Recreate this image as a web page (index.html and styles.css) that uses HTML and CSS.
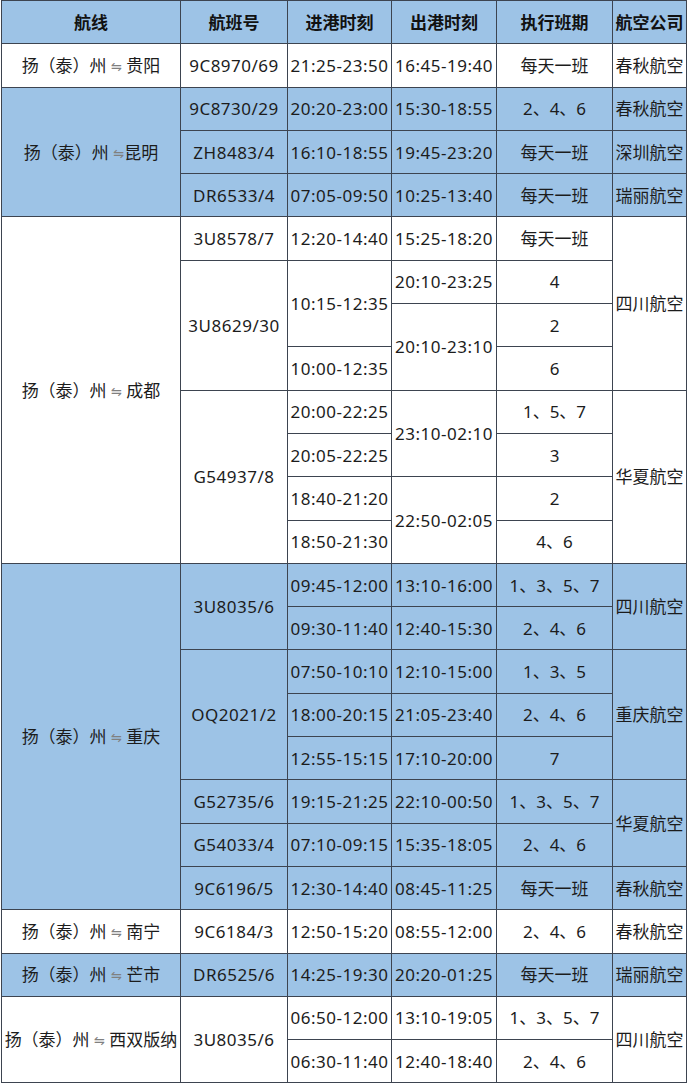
FILE: index.html
```html
<!DOCTYPE html>
<html lang="zh-CN">
<head>
<meta charset="utf-8">
<title>航线</title>
<link rel="stylesheet" href="styles.css">
</head>
<body>
<div class="grid">
  <div class="c h">航线</div>
  <div class="c h">航班号</div>
  <div class="c h">进港时刻</div>
  <div class="c h">出港时刻</div>
  <div class="c h">执行班期</div>
  <div class="c h">航空公司</div>

  <div class="c"><span class="rt">扬（泰）州 <span class="arr">⇋</span> 贵阳</span></div>
  <div class="c n">9C8970/69</div>
  <div class="c n">21:25-23:50</div>
  <div class="c n">16:45-19:40</div>
  <div class="c">每天一班</div>
  <div class="c">春秋航空</div>

  <div class="c b r3"><span class="rt">扬（泰）州 <span class="arr">⇋</span>昆明</span></div>
  <div class="c b n">9C8730/29</div>
  <div class="c b n">20:20-23:00</div>
  <div class="c b n">15:30-18:55</div>
  <div class="c b">2、4、6</div>
  <div class="c b">春秋航空</div>
  <div class="c b n">ZH8483/4</div>
  <div class="c b n">16:10-18:55</div>
  <div class="c b n">19:45-23:20</div>
  <div class="c b">每天一班</div>
  <div class="c b">深圳航空</div>
  <div class="c b n">DR6533/4</div>
  <div class="c b n">07:05-09:50</div>
  <div class="c b n">10:25-13:40</div>
  <div class="c b">每天一班</div>
  <div class="c b">瑞丽航空</div>

  <div class="c r8"><span class="rt">扬（泰）州 <span class="arr">⇋</span> 成都</span></div>
  <div class="c n">3U8578/7</div>
  <div class="c n">12:20-14:40</div>
  <div class="c n">15:25-18:20</div>
  <div class="c">每天一班</div>
  <div class="c r4">四川航空</div>
  <div class="c n r3">3U8629/30</div>
  <div class="c n r2">10:15-12:35</div>
  <div class="c n">20:10-23:25</div>
  <div class="c">4</div>
  <div class="c n r2">20:10-23:10</div>
  <div class="c">2</div>
  <div class="c n">10:00-12:35</div>
  <div class="c">6</div>
  <div class="c n r4">G54937/8</div>
  <div class="c n">20:00-22:25</div>
  <div class="c n r2">23:10-02:10</div>
  <div class="c">1、5、7</div>
  <div class="c r4">华夏航空</div>
  <div class="c n">20:05-22:25</div>
  <div class="c">3</div>
  <div class="c n">18:40-21:20</div>
  <div class="c n r2">22:50-02:05</div>
  <div class="c">2</div>
  <div class="c n">18:50-21:30</div>
  <div class="c">4、6</div>

  <div class="c b r8"><span class="rt">扬（泰）州 <span class="arr">⇋</span> 重庆</span></div>
  <div class="c b n r2">3U8035/6</div>
  <div class="c b n">09:45-12:00</div>
  <div class="c b n">13:10-16:00</div>
  <div class="c b">1、3、5、7</div>
  <div class="c b r2">四川航空</div>
  <div class="c b n">09:30-11:40</div>
  <div class="c b n">12:40-15:30</div>
  <div class="c b">2、4、6</div>
  <div class="c b n r3">OQ2021/2</div>
  <div class="c b n">07:50-10:10</div>
  <div class="c b n">12:10-15:00</div>
  <div class="c b">1、3、5</div>
  <div class="c b r3">重庆航空</div>
  <div class="c b n">18:00-20:15</div>
  <div class="c b n">21:05-23:40</div>
  <div class="c b">2、4、6</div>
  <div class="c b n">12:55-15:15</div>
  <div class="c b n">17:10-20:00</div>
  <div class="c b">7</div>
  <div class="c b n">G52735/6</div>
  <div class="c b n">19:15-21:25</div>
  <div class="c b n">22:10-00:50</div>
  <div class="c b">1、3、5、7</div>
  <div class="c b r2">华夏航空</div>
  <div class="c b n">G54033/4</div>
  <div class="c b n">07:10-09:15</div>
  <div class="c b n">15:35-18:05</div>
  <div class="c b">2、4、6</div>
  <div class="c b n">9C6196/5</div>
  <div class="c b n">12:30-14:40</div>
  <div class="c b n">08:45-11:25</div>
  <div class="c b">每天一班</div>
  <div class="c b">春秋航空</div>

  <div class="c"><span class="rt">扬（泰）州 <span class="arr">⇋</span> 南宁</span></div>
  <div class="c n">9C6184/3</div>
  <div class="c n">12:50-15:20</div>
  <div class="c n">08:55-12:00</div>
  <div class="c">2、4、6</div>
  <div class="c">春秋航空</div>

  <div class="c b"><span class="rt">扬（泰）州 <span class="arr">⇋</span> 芒市</span></div>
  <div class="c b n">DR6525/6</div>
  <div class="c b n">14:25-19:30</div>
  <div class="c b n">20:20-01:25</div>
  <div class="c b">每天一班</div>
  <div class="c b">瑞丽航空</div>

  <div class="c r2"><span class="rt">扬（泰）州 <span class="arr">⇋</span> 西双版纳</span></div>
  <div class="c n r2">3U8035/6</div>
  <div class="c n">06:50-12:00</div>
  <div class="c n">13:10-19:05</div>
  <div class="c">1、3、5、7</div>
  <div class="c r2">四川航空</div>
  <div class="c n">06:30-11:40</div>
  <div class="c n">12:40-18:40</div>
  <div class="c">2、4、6</div>
</div>
</body>
</html>
```
FILE: styles.css
```css
html, body {
  margin: 0;
  padding: 0;
  background: #ffffff;
}
body {
  font-family: "Noto Sans", "Noto Sans CJK SC", "DejaVu Sans", sans-serif;
  font-size: 17px;
  color: #1c1c1c;
}
.grid {
  display: grid;
  width: 684px;
  margin-left: 1px;
  padding: 1px;
  gap: 1px;
  background: #3d4450;
  grid-template-columns: 178px 106px 103px 104px 115px 73px;
  grid-template-rows: repeat(25, 42.3px);
}
.c {
  background: #ffffff;
  display: flex;
  align-items: center;
  justify-content: center;
  white-space: nowrap;
  line-height: 1;
}
.b, .h {
  background: #9dc3e6;
}
.h {
  font-weight: bold;
  color: #111111;
}
.n {
  letter-spacing: 0.5px;
}
.rt {
  white-space: pre;
}
.arr {
  font-family: "DejaVu Sans", sans-serif;
  font-size: 13px;
  color: #808080;
  vertical-align: 1px;
}
.r2 { grid-row: span 2; }
.r3 { grid-row: span 3; }
.r4 { grid-row: span 4; }
.r8 { grid-row: span 8; }
```
